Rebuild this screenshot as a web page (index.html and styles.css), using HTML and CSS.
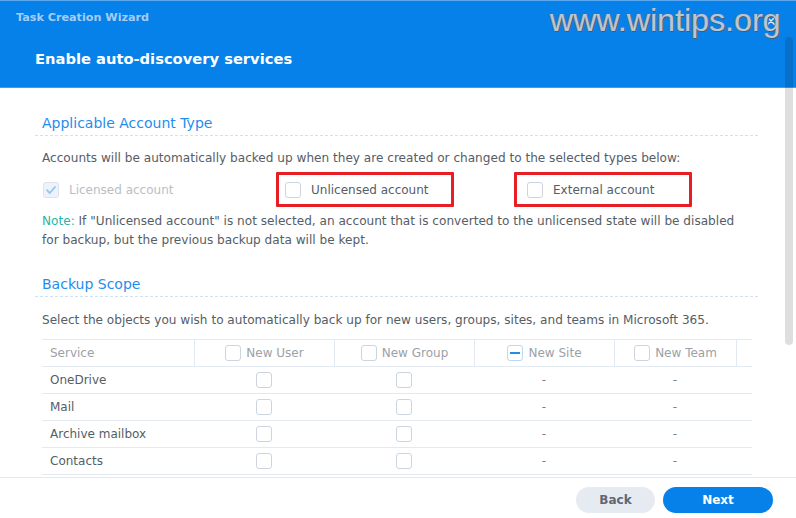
FILE: index.html
```html
<!DOCTYPE html>
<html>
<head>
<meta charset="utf-8">
<link rel="stylesheet" href="styles.css">
</head>
<body>
<div class="dialog">
  <header class="hdr">
    <div class="wiz-title">Task Creation Wizard</div>
    <div class="step-title">Enable auto-discovery services</div>
    <svg class="close" width="10" height="10" viewBox="0 0 10 10"><path d="M1 1L9 9M9 1L1 9" stroke="#d6e8fb" stroke-width="1.6" stroke-linecap="round"/></svg>
    <div class="watermark">www.wintips.org</div>
  </header>

  <main class="body">
    <section class="section">
      <h2 class="sec-title">Applicable Account Type</h2>
      <p class="desc">Accounts will be automatically backed up when they are created or changed to the selected types below:</p>
      <div class="opts">
        <label class="opt disabled"><span class="cb checked"><svg width="12" height="12" viewBox="0 0 12 12"><path d="M2 6.2L4.8 9L10 3" fill="none" stroke="#93c5f1" stroke-width="1.8" stroke-linecap="round" stroke-linejoin="round"/></svg></span>Licensed account</label>
        <label class="opt"><span class="cb"></span>Unlicensed account</label>
        <label class="opt"><span class="cb"></span>External account</label>
        <span class="mark mark-1"></span>
        <span class="mark mark-2"></span>
      </div>
      <p class="note"><span class="note-lbl">Note:</span> If "Unlicensed account" is not selected, an account that is converted to the unlicensed state will be disabled for backup, but the previous backup data will be kept.</p>
    </section>

    <section class="section">
      <h2 class="sec-title">Backup Scope</h2>
      <p class="desc">Select the objects you wish to automatically back up for new users, groups, sites, and teams in Microsoft 365.</p>
      <div class="grid">
        <div class="row head">
          <div class="c c-name">Service</div>
          <div class="c"><span class="cb"></span>New User</div>
          <div class="c"><span class="cb"></span>New Group</div>
          <div class="c"><span class="cb ind"><i></i></span>New Site</div>
          <div class="c"><span class="cb"></span>New Team</div>
          <div class="c c-fill"></div>
        </div>
        <div class="row">
          <div class="c c-name">OneDrive</div>
          <div class="c"><span class="cb"></span></div>
          <div class="c"><span class="cb"></span></div>
          <div class="c dash">-</div>
          <div class="c dash">-</div>
          <div class="c"></div>
        </div>
        <div class="row">
          <div class="c c-name">Mail</div>
          <div class="c"><span class="cb"></span></div>
          <div class="c"><span class="cb"></span></div>
          <div class="c dash">-</div>
          <div class="c dash">-</div>
          <div class="c"></div>
        </div>
        <div class="row">
          <div class="c c-name">Archive mailbox</div>
          <div class="c"><span class="cb"></span></div>
          <div class="c"><span class="cb"></span></div>
          <div class="c dash">-</div>
          <div class="c dash">-</div>
          <div class="c"></div>
        </div>
        <div class="row">
          <div class="c c-name">Contacts</div>
          <div class="c"><span class="cb"></span></div>
          <div class="c"><span class="cb"></span></div>
          <div class="c dash">-</div>
          <div class="c dash">-</div>
          <div class="c"></div>
        </div>
      </div>
    </section>
  </main>

  <footer class="ftr">
    <button class="btn btn-back">Back</button>
    <button class="btn btn-next">Next</button>
  </footer>

  <div class="scroll-thumb"></div>
</div>
</body>
</html>
```

FILE: styles.css
```css
* { box-sizing: border-box; }
html, body { margin: 0; padding: 0; background: #fff; }
body { font-family: "DejaVu Sans", Verdana, sans-serif; color: #555d66; }

.dialog {
  position: relative;
  width: 796px;
  height: 518px;
  overflow: hidden;
  display: flex;
  flex-direction: column;
  background: #fff;
}

.hdr {
  position: relative;
  height: 88px;
  flex: none;
  background: #0781ea;
  border-top: 1px solid #5ba9f0;
  border-bottom: 1px solid #3f9cf0;
  padding: 10px 0 0 16px;
}
.wiz-title {
  font-size: 11.2px;
  font-weight: bold;
  color: #a3cdf6;
  line-height: 14px;
}
.step-title {
  margin: 23px 0 0 19px;
  font-size: 14.7px;
  font-weight: bold;
  color: #fff;
  line-height: 22px;
}
.close {
  position: absolute;
  left: 766px;
  top: 15px;
}
.watermark {
  position: absolute;
  left: 550px;
  top: 1px;
  font-family: "Liberation Sans", Arial, sans-serif;
  font-size: 32.2px;
  line-height: 36px;
  color: #b9c6d6;
  text-shadow: 1px 1px 0 #4a5a6e, -1px 0 0 #6a7c90;
}

.body {
  flex: 1;
  overflow: hidden;
  padding: 0 38px 0 35px;
}
.section { padding-top: 24px; }
.section + .section { padding-top: 23px; }

.sec-title {
  margin: 0;
  padding: 0 0 1px 7px;
  font-size: 14px;
  font-weight: normal;
  line-height: 22px;
  color: #1f8ded;
  border-bottom: 1px dashed #cfe1f4;
}
.desc, .note {
  margin: 13px 16px 0 7px;
  font-size: 12.1px;
  line-height: 19px;
  color: #555d66;
}
.section + .section .desc { margin-top: 14px; }
.note { margin-top: 5px; }
.note-lbl { color: #2ab4a6; }

.opts {
  position: relative;
  display: grid;
  grid-template-columns: 242px 242px 242px;
  align-items: center;
  height: 35px;
  margin: 4px 0 0 8px;
}
.opt {
  display: flex;
  align-items: center;
  gap: 10px;
  font-size: 12px;
  color: #555d66;
}
.opt.disabled { color: #b9bec4; }

.mark {
  position: absolute;
  top: 0;
  height: 35px;
  width: 178px;
  border: 3px solid #e81e25;
  border-radius: 1px;
}
.mark-1 { left: 233px; }
.mark-2 { left: 471px; }

.cb {
  display: inline-flex;
  align-items: center;
  justify-content: center;
  flex: none;
  width: 16px;
  height: 16px;
  border: 1px solid #ccd5df;
  border-radius: 3px;
  background: #fff;
}
.cb.checked { background: #eef3f9; border-color: #dbe3ec; }
.cb.ind { border-color: #bcd8f4; }
.cb.ind i {
  display: block;
  width: 10px;
  height: 2px;
  background: #1f8ded;
}

.grid {
  margin: 9px 0 0 7px;
  width: 710px;
  border-top: 1px solid #e3e9f0;
  font-size: 12px;
}
.row {
  display: grid;
  grid-template-columns: 152px 140px 140px 140px 122px 16px;
  height: 27px;
  border-bottom: 1px solid #e3e9f0;
  color: #555d66;
}
.row.head { color: #9ba1a8; }
.c {
  display: flex;
  align-items: center;
  justify-content: center;
  gap: 5px;
}
.head .c { border-left: 1px solid #e3e9f0; }
.head .c:first-child { border-left: 0; }
.c-name { justify-content: flex-start; padding-left: 8px; }
.dash { color: #7a8088; }

.ftr {
  flex: none;
  height: 41px;
  border-top: 1px solid #e3e9f0;
  display: flex;
  justify-content: flex-end;
  align-items: flex-start;
  gap: 8px;
  padding: 9px 23px 0 0;
}
.btn {
  height: 26px;
  border: 0;
  border-radius: 13px;
  font-family: "DejaVu Sans", Verdana, sans-serif;
  font-size: 12px;
  font-weight: bold;
  padding: 0;
}
.btn-back { width: 79px; background: #e6ebf2; color: #5f6770; }
.btn-next { width: 110px; background: #0781ea; color: #fff; }

.scroll-thumb {
  position: absolute;
  left: 785px;
  top: 37px;
  width: 8px;
  height: 308px;
  border-radius: 4px;
  background: rgba(0, 0, 0, 0.13);
}
```
